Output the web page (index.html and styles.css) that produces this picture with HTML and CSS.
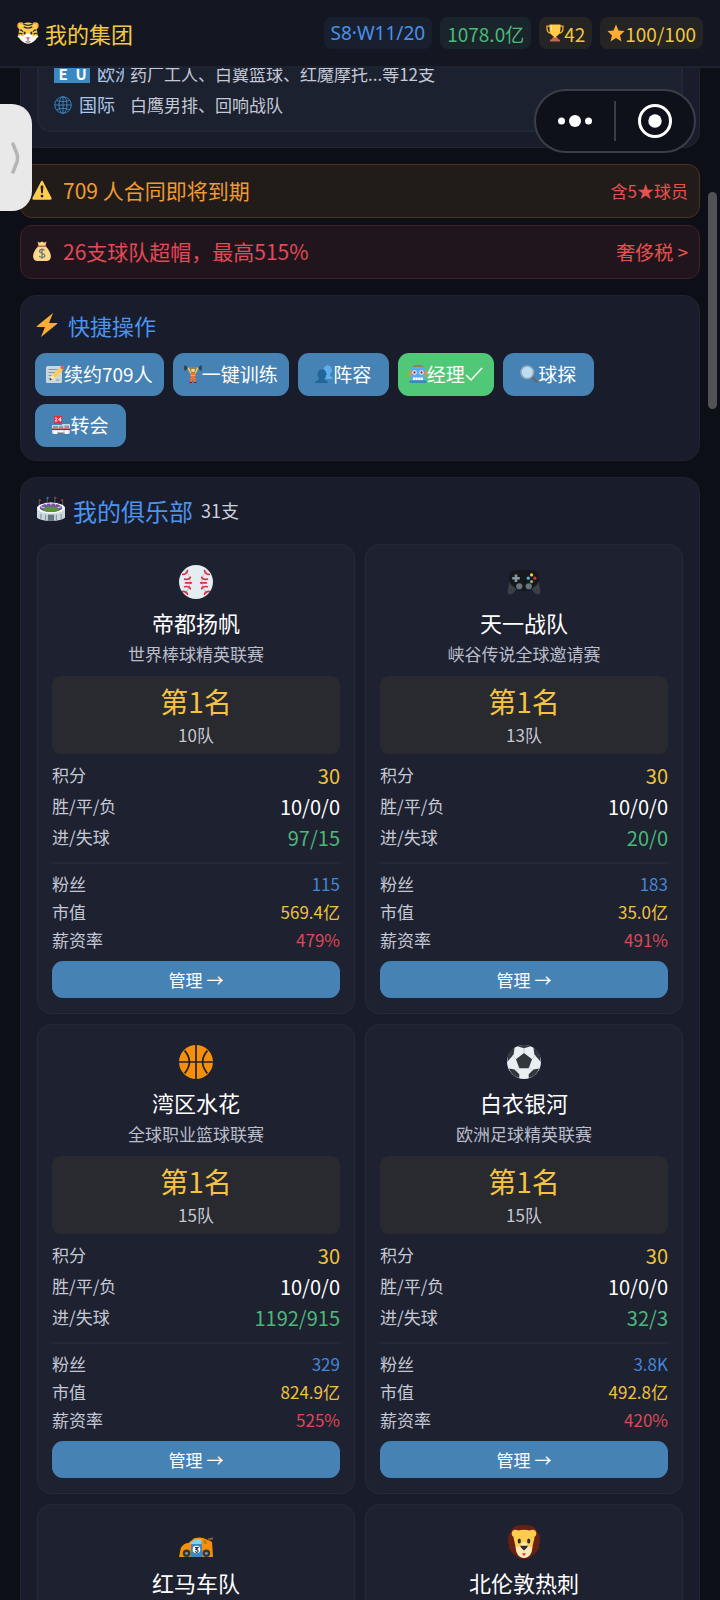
FILE: index.html
```html
<!DOCTYPE html>
<html lang="zh-CN">
<head>
<meta charset="utf-8">
<meta name="viewport" content="width=device-width, initial-scale=1">
<title>我的集团</title>
<link rel="stylesheet" href="styles.css">
</head>
<body>
<svg class="sprite" aria-hidden="true">
  <symbol id="tiger" viewBox="0 0 36 36">
    <circle cx="6" cy="6" r="5.5" fill="#ffac33"/><circle cx="30" cy="6" r="5.5" fill="#ffac33"/>
    <circle cx="6.500" cy="6.500" r="3" fill="#ffd9a0"/><circle cx="29.500" cy="6.500" r="3" fill="#ffd9a0"/>
    <path fill="#ffcc4d" d="M18 1C8 1 3 8 3 16c0 4-1 6-2 8 3 1 3 3 5 5 3 4 8 6 12 6s9-2 12-6c2-2 2-4 5-5-1-2-2-4-2-8C33 8 28 1 18 1z"/>
    <path fill="#fff" d="M1 23c3-1 6-1 9 1 3-4 5-5 8-5s5 1 8 5c3-2 6-2 9-1-1 3-3 3-5 6-3 4-8 6-12 6s-9-2-12-6c-2-3-4-3-5-6z"/>
    <path d="M10 3q8 5 16 0M11 8q7 4 14 0M4 13q4 0 6 3M32 13q-4 0-6 3M3 19q4-1 6 1M33 19q-4-1-6 1" fill="none" stroke="#292f33" stroke-width="2"/>
    <ellipse cx="12.500" cy="18" rx="1.700" ry="2.500" fill="#292f33"/><ellipse cx="23.500" cy="18" rx="1.700" ry="2.500" fill="#292f33"/>
    <path fill="#e75a70" d="M14 25h8l-4 4z"/><path d="M18 28v3m-4 1q4 2 8 0" stroke="#67404a" stroke-width="1.500" fill="none"/>
  </symbol>
  <symbol id="trophy" viewBox="0 0 36 36">
    <path fill="none" stroke="#ffac33" stroke-width="2.500" d="M8 4H2v5c0 6 4 9 9 10M28 4h6v5c0 6-4 9-9 10"/>
    <path fill="#ffcc4d" d="M7 1h22v8c0 9-4 14-8 15v5h-6v-5C11 23 7 18 7 9z"/>
    <path fill="#ffe8b6" d="M10 3h2v11c-2-3-2-7-2-11z"/>
    <path fill="#c1694f" d="M13 27h10l2 4h3v4H8v-4h3z"/>
  </symbol>
  <symbol id="star" viewBox="0 0 36 36"><path fill="#ffac33" d="M18 1l5 12 12 1-9 9 3 12-11-7-11 7 3-12-9-9 12-1z"/></symbol>
  <symbol id="globe" viewBox="0 0 36 36">
    <g fill="none" stroke="#3b7fb5" stroke-width="2"><circle cx="18" cy="18" r="16.500"/><ellipse cx="18" cy="18" rx="8" ry="16.500"/><path d="M18 1v34M1 18h34M4 9q14 5 28 0M4 27q14-5 28 0"/></g>
  </symbol>
  <symbol id="warning" viewBox="0 0 36 36">
    <path fill="#ffcc4d" d="M18 1.500c1 0 1.500.5 2 1.500l15 29c1 2 0 3.500-2 3.500H3c-2 0-3-1.500-2-3.500L16 3c.5-1 1-1.500 2-1.500z"/>
    <path fill="#231f20" d="M15.500 12c0-3 5-3 5 0l-1 12h-3z"/><circle cx="18" cy="29" r="2.600" fill="#231f20"/>
  </symbol>
  <symbol id="moneybag" viewBox="0 0 36 36">
    <path fill="#fdd888" d="M10 1l4 2 4-2 4 2 4-2-2 8c5 4 10 12 10 19 0 5-3 8-8 8H10c-5 0-8-3-8-8C2 21 7 13 12 9z"/>
    <path d="M11 9.500h14" stroke="#bf6952" stroke-width="2.500" stroke-linecap="round"/>
    <path d="M22.500 17c-2-3-9-3-9 1.500 0 4.500 9.500 2.500 9.500 7.500 0 4.500-8 4.500-10 1M18 13v19" fill="none" stroke="#67757f" stroke-width="2.200"/>
  </symbol>
  <symbol id="bolt" viewBox="0 0 36 36"><path fill="#ffac33" d="M27 0L3 19.500c-1 .8-.6 1.500.5 1.500H15L9 36 33 16.500c1-.8.600-1.500-.5-1.500H21z"/></symbol>
  <symbol id="memo" viewBox="0 0 36 36">
    <path fill="#ccd6dd" d="M3 2h26q3 0 3 3v28q0 3-3 3H3q-3 0-3-3V5q0-3 3-3z"/>
    <path stroke="#8899a6" stroke-width="2" d="M5 9h18M5 15h14M5 21h9M5 27h9M20 30h7"/>
    <path fill="#ffcc4d" d="M30 4l5 5-17 17-6-6z"/><path fill="#ea596e" d="M31 2q2-2 4 0t0 5l-2 3-5-5z"/><path fill="#ffe8b6" d="M12 19l7 7-11 4z"/><path fill="#292f33" d="M9 26l3 3-5 2z"/>
  </symbol>
  <symbol id="lifter" viewBox="0 0 36 36">
    <path d="M4 6h28" stroke="#99aab5" stroke-width="1.500"/><path d="M2 1v10M5 3v6M34 1v10M31 3v6" stroke="#31373d" stroke-width="2.800"/>
    <path d="M9 7l5 10M27 7l-5 10" stroke="#ffcc4d" stroke-width="3" stroke-linecap="round"/>
    <circle cx="18" cy="10" r="4" fill="#ffdc5d"/><path fill="#bb6b2b" d="M13.500 9q0-5 4.500-5t4.500 5q-4.500-3-9 0z"/>
    <path fill="#f4702c" d="M13 15h10l-1 11h2l-1 8h-3l-2-7-2 7h-3l-1-8h2z"/><path d="M13 21h10" stroke="#ffcc4d" stroke-width="1.500"/><path d="M11 35h5M20 35h5" stroke="#a0041e" stroke-width="2"/>
  </symbol>
  <symbol id="people" viewBox="0 0 36 36">
    <path fill="#5dadec" d="M18 8c0-10 15-10 15 0 2 1 1 4 0 5-1 4-3 5-3 7 0 3 6 3 6 8H20c4-10-2-10-2-20z"/>
    <path fill="#226699" d="M6 16c0-10 16-10 16 0 2 1 1 4 0 5-1 4-3 5-3 7 0 3 7 3 7 8H0c0-5 8-5 8-8 0-2-2-3-2-7-2-1-2-4 0-5z"/>
  </symbol>
  <symbol id="robot" viewBox="0 0 36 36">
    <path d="M7 4Q18-1 29 4" fill="none" stroke="#a9713c" stroke-width="2.500"/>
    <path fill="#f4900c" d="M0 13q0-3 3-3h30q3 0 3 3v8q0 3-3 3H3q-3 0-3-3z"/>
    <path fill="#55acee" d="M7 4h22q3 0 3 4v26H4V8q0-4 3-4z"/><path fill="#3b88c3" d="M1 31h34v5H1z"/>
    <circle cx="11" cy="15" r="4.500" fill="#e8eef2"/><circle cx="25" cy="15" r="4.500" fill="#e8eef2"/><circle cx="11" cy="15" r="2.300" fill="#be1931"/><circle cx="25" cy="15" r="2.300" fill="#be1931"/>
    <path fill="#fff" d="M8 25h20v5H8z"/><path d="M13 25v5M18 25v5M23 25v5" stroke="#99aab5"/>
  </symbol>
  <symbol id="search" viewBox="0 0 36 36">
    <path d="M24 24l9 9" stroke="#5f6a73" stroke-width="5" stroke-linecap="round"/><circle cx="14.500" cy="14.500" r="12.500" fill="#bdddf4" stroke="#99a9b5" stroke-width="3"/>
  </symbol>
  <symbol id="store" viewBox="0 0 36 36">
    <path fill="#dd2e44" d="M4 0h16v15H4z"/><path d="M6 5q3-3 4 0 0 2-4 5h5M17 11V3l-4 5h6" fill="none" stroke="#fff" stroke-width="1.800"/>
    <path fill="#ccd6dd" d="M0 18h20v-2h16v19H0z"/><path fill="#8899a6" d="M2 20h10v4H2zM14 20h8v4h-8zM25 19h9v5h-9z"/><path d="M0 26.500h36" stroke="#be1931" stroke-width="3"/><path fill="#fff" d="M3 29h8v7H3zM13 29h9v5h-9zM26 29h7v7h-7z"/><path fill="#67757f" d="M11 33h12v3H11z"/>
  </symbol>
  <symbol id="stadium" viewBox="0 0 36 36">
    <path d="M3 12V4M13 9V1M23 9V1M33 12V4" stroke="#66757f"/><path fill="#b8323f" d="M3 4l3 1.500L3 7zM23 1l3 1.500L23 4zM33 4l-3 1.500L33 7z"/><path fill="#3b88c3" d="M13 1l3 1.500L13 4z"/>
    <path fill="#ccd6dd" d="M0 15h36v13q-4 4-18 4T0 28z"/><path d="M5 23v7M11 24v8M25 24v8M31 23v7" stroke="#8899a6" stroke-width="1.500"/>
    <ellipse cx="18" cy="15.500" rx="18" ry="7" fill="#f5f8fa"/><ellipse cx="18" cy="15" rx="14.500" ry="5.500" fill="#744eaa"/><path d="M5 14l5 1M31 14l-5 1M10 9l3 3M26 9l-3 3M18 8v4" stroke="#fff"/><ellipse cx="18" cy="17" rx="10.500" ry="3.500" fill="#5c913b"/>
    <path fill="#66757f" d="M14 24h8v8h-8z"/>
  </symbol>
  <symbol id="baseball" viewBox="0 0 36 36">
    <circle cx="18" cy="18" r="18" fill="#e6edf2"/><path d="M6 5q12 13 0 26M30 5q-12 13 0 26" fill="none" stroke="#d3a0aa" stroke-width=".8"/>
    <path d="M4 10q4 0 5-4M6 15q5 1 6-2M7 19h6M6 23q5-1 6 2M4 28q4 0 5 3M32 10q-4 0-5-4M30 15q-5 1-6-2M29 19h-6M30 23q-5-1-6 2M32 28q-4 0-5 3" fill="none" stroke="#dd2e44" stroke-width="1.800" stroke-linecap="round"/>
  </symbol>
  <symbol id="gamepad" viewBox="0 0 36 36">
    <path fill="#3b4045" d="M3 15h9l-3 12q-4 5-7 4-2-1-1-6zM33 15h-9l3 12q4 5 7 4 2-1 1-6z"/>
    <path fill="#16191b" d="M7 6q11-2 22 0 6 2 5 10-1 5-5 7l-5 4q-6 1-12 0l-5-4q-4-2-5-7Q1 8 7 6z"/>
    <path d="M5.500 14h8M9.500 10v8" stroke="#8899a6" stroke-width="2.800"/><circle cx="13" cy="22.500" r="3.300" fill="#66757f"/><circle cx="23" cy="22.500" r="3.300" fill="#66757f"/>
    <circle cx="26" cy="10.500" r="1.700" fill="#ffcc4d"/><circle cx="29.500" cy="14" r="1.700" fill="#dd2e44"/><circle cx="26" cy="17.500" r="1.700" fill="#a6a455"/><circle cx="22.500" cy="14" r="1.700" fill="#55acee"/>
  </symbol>
  <symbol id="basketball" viewBox="0 0 36 36">
    <circle cx="18" cy="18" r="18" fill="#f4900c"/><path d="M18 0v36M0 18h36M6 6q10 12 0 24M30 6q-10 12 0 24" fill="none" stroke="#231f20" stroke-width="1.800"/>
  </symbol>
  <symbol id="soccer" viewBox="0 0 36 36">
    <circle cx="18" cy="18" r="18" fill="#e9eff3"/>
    <path fill="#31373d" d="M18 8.500l8.500 6.500-3.500 9.500H13L9.500 15zM11 1.400Q18-1.200 25 1.400L18 3.500zM.5 18Q0 7 8 3l-1 7-5 6zM35.500 18Q36 7 28 3l1 7 5 6zM2 25l6 1 5 5v4Q5 33 2 25zM34 25l-6 1-5 5v4q8-2 11-10z"/>
    <path d="M18 9V3M26 15l4-4M23 24l4 3M13 24l-4 3M10 15l-4-4" stroke="#b8c4cc" stroke-width=".8"/>
  </symbol>
  <symbol id="racecar" viewBox="0 0 36 36">
    <path fill="#8a5a22" d="M31 14l5-1v2l-5 2z"/><path fill="#f4900c" d="M0 34l2-10q3-5 8-5l6-5q8-2 13 1l6 3 1 16z"/>
    <path fill="#8ccaf7" d="M12 19l5-4h7l-1 5H12z"/><path fill="#3b88c3" d="M13 20h11l1 14H12z"/><path fill="#c77a15" d="M26 15l3 1 1 4h-4z"/>
    <circle cx="18.500" cy="26" r="4" fill="#fff"/><path d="M17 24h3l-2 2q3 0 2 2t-3 0" fill="none" stroke="#292f33" stroke-width="1.200"/>
    <circle cx="8" cy="30" r="4" fill="#31373d"/><circle cx="29" cy="30" r="4" fill="#31373d"/><circle cx="8" cy="30" r="1.500" fill="#8899a6"/><circle cx="29" cy="30" r="1.500" fill="#8899a6"/>
  </symbol>
  <symbol id="lion" viewBox="0 0 36 36">
    <path fill="#662113" d="M18 0c8 0 12 2 14 7 4 5 3 10 2 16-1 5-4 7-7 9-2 3-6 4-9 4s-7-1-9-4c-3-2-6-4-7-9C1 17 0 12 4 7 6 2 10 0 18 0z"/>
    <circle cx="9" cy="9" r="4" fill="#ffcc4d"/><circle cx="27" cy="9" r="4" fill="#ffcc4d"/>
    <path fill="#ffcc4d" d="M18 5c8 0 11 3 11 9l-3 13q-3 8-8 8t-8-8L7 14c0-6 3-9 11-9z"/>
    <path fill="#ffe8b6" d="M18 18q3 0 4 5h5q-1 12-9 12T9 23h5q1-5 4-5z"/>
    <ellipse cx="13" cy="17" rx="1.700" ry="2.700" fill="#292f33"/><ellipse cx="23" cy="17" rx="1.700" ry="2.700" fill="#292f33"/><path fill="#292f33" d="M14 22h8q0 2-4 5-4-3-4-5z"/><path fill="#dd2e44" d="M16 30h4l-2 3z"/>
  </symbol>
</svg>

<div class="app">
  <header class="topbar">
    <h1 class="brand"><svg class="icon-22"><use href="#tiger"/></svg>我的集团</h1>
    <div class="badges">
      <span class="badge blue">S8·W11/20</span>
      <span class="badge green">1078.0亿</span>
      <span class="badge gold"><svg class="icon-18"><use href="#trophy"/></svg>42</span>
      <span class="badge gold"><svg class="icon-18"><use href="#star"/></svg>100/100</span>
    </div>
  </header>

  <main class="content">
    <section class="panel regions">
      <div class="region-list">
        <div class="region"><span class="region-name"><span class="flag"><b>E</b><b>U</b></span>欧洲</span><span class="region-teams">药厂工人、白翼篮球、红魔摩托...等12支</span></div>
        <div class="region"><span class="region-name"><svg class="icon-18"><use href="#globe"/></svg>国际</span><span class="region-teams">白鹰男排、回响战队</span></div>
      </div>
    </section>

    <div class="alerts">
      <a class="alert warn" href="#contracts"><svg class="icon-20"><use href="#warning"/></svg><span class="alert-text">709 人合同即将到期</span><span class="alert-note small">含5★球员</span></a>
      <a class="alert danger" href="#tax"><svg class="icon-20"><use href="#moneybag"/></svg><span class="alert-text">26支球队超帽，最高515%</span><span class="alert-note">奢侈税 &gt;</span></a>
    </div>

    <section class="panel quick">
      <h2 class="quick-title"><svg class="icon-24"><use href="#bolt"/></svg>快捷操作</h2>
      <div class="actions">
        <button class="action"><svg class="icon-18"><use href="#memo"/></svg>续约709人</button>
        <button class="action"><svg class="icon-18"><use href="#lifter"/></svg>一键训练</button>
        <button class="action"><svg class="icon-18"><use href="#people"/></svg>阵容</button>
        <button class="action on"><svg class="icon-18"><use href="#robot"/></svg>经理<svg class="icon-18" viewBox="0 0 18 18"><path d="M1 10l5 5L17 3" fill="none" stroke="#fff" stroke-width="1.500"/></svg></button>
        <button class="action"><svg class="icon-18"><use href="#search"/></svg>球探</button>
        <button class="action"><svg class="icon-18"><use href="#store"/></svg>转会</button>
      </div>
    </section>

    <section class="panel clubs">
      <h2 class="clubs-title"><svg class="icon-28"><use href="#stadium"/></svg>我的俱乐部<span class="count">31支</span></h2>
      <div class="club-grid">
        <article class="club">
          <svg class="icon-34"><use href="#baseball"/></svg>
          <h3 class="club-name">帝都扬帆</h3>
          <p class="league">世界棒球精英联赛</p>
          <div class="rank"><strong>第1名</strong><span>10队</span></div>
          <dl class="stats main-stats">
            <div><dt>积分</dt><dd class="c-gold">30</dd></div>
            <div><dt>胜/平/负</dt><dd>10/0/0</dd></div>
            <div><dt>进/失球</dt><dd class="c-green">97/15</dd></div>
          </dl>
          <dl class="stats sub-stats">
            <div><dt>粉丝</dt><dd class="c-blue">115</dd></div>
            <div><dt>市值</dt><dd class="c-gold">569.4亿</dd></div>
            <div><dt>薪资率</dt><dd class="c-red">479%</dd></div>
          </dl>
          <button class="manage">管理 →</button>
        </article>
        <article class="club">
          <svg class="icon-34"><use href="#gamepad"/></svg>
          <h3 class="club-name">天一战队</h3>
          <p class="league">峡谷传说全球邀请赛</p>
          <div class="rank"><strong>第1名</strong><span>13队</span></div>
          <dl class="stats main-stats">
            <div><dt>积分</dt><dd class="c-gold">30</dd></div>
            <div><dt>胜/平/负</dt><dd>10/0/0</dd></div>
            <div><dt>进/失球</dt><dd class="c-green">20/0</dd></div>
          </dl>
          <dl class="stats sub-stats">
            <div><dt>粉丝</dt><dd class="c-blue">183</dd></div>
            <div><dt>市值</dt><dd class="c-gold">35.0亿</dd></div>
            <div><dt>薪资率</dt><dd class="c-red">491%</dd></div>
          </dl>
          <button class="manage">管理 →</button>
        </article>
        <article class="club">
          <svg class="icon-34"><use href="#basketball"/></svg>
          <h3 class="club-name">湾区水花</h3>
          <p class="league">全球职业篮球联赛</p>
          <div class="rank"><strong>第1名</strong><span>15队</span></div>
          <dl class="stats main-stats">
            <div><dt>积分</dt><dd class="c-gold">30</dd></div>
            <div><dt>胜/平/负</dt><dd>10/0/0</dd></div>
            <div><dt>进/失球</dt><dd class="c-green">1192/915</dd></div>
          </dl>
          <dl class="stats sub-stats">
            <div><dt>粉丝</dt><dd class="c-blue">329</dd></div>
            <div><dt>市值</dt><dd class="c-gold">824.9亿</dd></div>
            <div><dt>薪资率</dt><dd class="c-red">525%</dd></div>
          </dl>
          <button class="manage">管理 →</button>
        </article>
        <article class="club">
          <svg class="icon-34"><use href="#soccer"/></svg>
          <h3 class="club-name">白衣银河</h3>
          <p class="league">欧洲足球精英联赛</p>
          <div class="rank"><strong>第1名</strong><span>15队</span></div>
          <dl class="stats main-stats">
            <div><dt>积分</dt><dd class="c-gold">30</dd></div>
            <div><dt>胜/平/负</dt><dd>10/0/0</dd></div>
            <div><dt>进/失球</dt><dd class="c-green">32/3</dd></div>
          </dl>
          <dl class="stats sub-stats">
            <div><dt>粉丝</dt><dd class="c-blue">3.8K</dd></div>
            <div><dt>市值</dt><dd class="c-gold">492.8亿</dd></div>
            <div><dt>薪资率</dt><dd class="c-red">420%</dd></div>
          </dl>
          <button class="manage">管理 →</button>
        </article>
        <article class="club">
          <svg class="icon-34"><use href="#racecar"/></svg>
          <h3 class="club-name">红马车队</h3>
        </article>
        <article class="club">
          <svg class="icon-34"><use href="#lion"/></svg>
          <h3 class="club-name">北伦敦热刺</h3>
        </article>
      </div>
    </section>
  </main>
</div>

<button class="drawer-tab" aria-label="展开"><svg class="drawer-icon" viewBox="0 0 12 32"><path d="M3 2l4 10q1 4 0 8L3 30" fill="none" stroke="#b4b5b5" stroke-width="3.500" stroke-linecap="round"/></svg></button>
<div class="capsule">
  <button class="capsule-btn" aria-label="更多"><svg class="dots" viewBox="0 0 34 12"><circle cx="3.500" cy="6" r="3.500" fill="#fff"/><circle cx="17" cy="6" r="6" fill="#fff"/><circle cx="30.500" cy="6" r="3.500" fill="#fff"/></svg></button>
  <button class="capsule-btn" aria-label="关闭"><svg class="icon-34" viewBox="0 0 34 34"><circle cx="17" cy="17" r="15.500" fill="none" stroke="#fff" stroke-width="3"/><circle cx="17" cy="17" r="6.700" fill="#fff"/></svg></button>
</div>
<div class="scroll-thumb"></div>
</body>
</html>
```

FILE: styles.css
```css
* { box-sizing: border-box; }

body {
  margin: 0;
  background: #0c0f16;
  color: #fff;
  font-family: "Noto Sans CJK SC", sans-serif;
  font-size: 17px;
}

h1, h2, h3, p, dl, dd { margin: 0; font-weight: 400; }
button { border: 0; padding: 0; color: inherit; font: inherit; background: none; }
svg { display: block; flex: none; }

.sprite { position: absolute; width: 0; height: 0; }
.icon-18 { width: 18px; height: 18px; }
.icon-20 { width: 20px; height: 20px; }
.icon-22 { width: 22px; height: 22px; }
.icon-24 { width: 24px; height: 24px; }
.icon-28 { width: 28px; height: 28px; }
.icon-34 { width: 34px; height: 34px; }

.app { display: flex; flex-direction: column; height: 100vh; overflow: hidden; }

.topbar {
  flex: none;
  display: flex;
  align-items: center;
  justify-content: space-between;
  height: 68px;
  padding: 0 17px;
  background: #141722;
  border-bottom: 2px solid #1d2230;
}
.brand { display: flex; align-items: center; gap: 6px; font-size: 22px; color: #f5c842; }
.badges { display: flex; gap: 8px; }
.badge {
  display: flex;
  align-items: center;
  height: 32px;
  padding: 0 7px;
  border-radius: 8px;
  font-size: 19px;
}
.badge.blue { background: #18202f; color: #4a90e8; font-family: "Noto Sans", "Noto Sans CJK SC", sans-serif; }
.badge.green { background: #19252b; color: #4cb878; }
.badge.gold { background: #252424; color: #f0c640; }

.content { flex: 1; min-height: 0; overflow: hidden; padding: 0 20px; }

.panel { background: #191c2a; border: 1px solid #20242f; border-radius: 16px; }

/* regions panel, scrolled partly under the top bar */
.regions { border-top: 0; border-radius: 0 0 16px 16px; padding: 0 16px 15px; }
.region-list {
  padding: 0 15px 10px;
  background: #1c2130;
  border: 2px solid #202737;
  border-top: 0;
  border-radius: 0 0 14px 14px;
  margin-top: -10px;
}
.region { display: flex; align-items: center; gap: 6px; height: 31px; }
.region-name {
  display: flex;
  align-items: center;
  gap: 7px;
  width: 70px;
  overflow: hidden;
  white-space: nowrap;
  font-size: 18px;
  line-height: 31px;
  color: #a9c6e6;
}
.region-teams { color: #c4c9d6; }
.flag { flex: none; display: flex; }
.flag b {
  width: 18px;
  height: 18px;
  background: #3b88c3;
  color: #fff;
  font-size: 15px;
  line-height: 18px;
  text-align: center;
}

.alerts { display: flex; flex-direction: column; gap: 7px; margin: 16px 0; }
.alert {
  display: flex;
  align-items: center;
  gap: 11px;
  height: 54px;
  padding: 0 11px 2px;
  border: 1px solid;
  border-radius: 12px;
  font-size: 21px;
  text-decoration: none;
}
.alert.warn { background: #211c1a; border-color: #49331d; color: #f09a32; }
.alert.danger { background: #21151d; border-color: #40202a; color: #e24a55; }
.alert-text { flex: 1; }
.alert-note { font-size: 19px; color: #e85050; }
.alert-note.small { font-size: 17px; }

.quick { padding: 13px 14px; }
.quick-title { display: flex; align-items: center; gap: 9px; height: 32px; margin-bottom: 12px; font-size: 22px; color: #4a94f0; }
.actions { display: flex; flex-wrap: wrap; gap: 8px 9px; }
.action {
  display: flex;
  align-items: center;
  justify-content: center;
  min-width: 91px;
  height: 43px;
  padding: 0 11px 2px;
  border-radius: 11px;
  background: #4682b4;
  font-size: 19px;
}
.action.on { background: #50c878; }

.clubs { margin-top: 16px; padding: 14px 16px 16px; }
.clubs-title { display: flex; align-items: center; gap: 8px; height: 36px; margin-bottom: 16px; font-size: 24px; color: #4a94f0; }
.count { font-size: 18px; color: #cdd1dc; }
.club-grid { display: grid; grid-template-columns: 1fr 1fr; gap: 10px; }
.club {
  display: flex;
  flex-direction: column;
  align-items: center;
  min-height: 470px;
  padding: 20px 14px 14px;
  background: #1e2130;
  border: 1px solid #262a37;
  border-radius: 14px;
}
.club-name { margin-top: 6px; font-size: 22px; line-height: 34px; }
.league { margin-top: 2px; line-height: 26px; color: #b9bdca; }
.rank {
  display: flex;
  flex-direction: column;
  align-items: center;
  width: 100%;
  height: 78px;
  margin-top: 9px;
  padding-top: 5px;
  border-radius: 9px;
  background: #292a30;
}
.rank strong { font-size: 28px; font-weight: 400; line-height: 40px; color: #f5c242; }
.rank span { line-height: 28px; color: #c4c7d0; }

.stats { width: 100%; }
.stats div { display: flex; align-items: center; justify-content: space-between; }
.stats dt { color: #c4c8d4; }
.main-stats { padding: 6px 0 9px; border-bottom: 2px solid #252937; }
.main-stats div { height: 31px; }
.main-stats dt { padding-bottom: 3px; }
.main-stats dd { font-size: 20px; }
.sub-stats { padding: 5px 0 8px; }
.sub-stats div { height: 28px; }
.c-gold { color: #f0c23c; }
.c-green { color: #4cb878; }
.c-blue { color: #4186d8; }
.c-red { color: #dc4856; }

.manage { width: 100%; height: 37px; border-radius: 11px; background: #4682b4; }

.drawer-tab {
  position: fixed;
  left: 0;
  top: 104px;
  display: flex;
  align-items: center;
  justify-content: flex-end;
  width: 32px;
  height: 107px;
  padding-right: 10px;
  border-radius: 0 20px 20px 0;
  background: #e8e9e8;
}
.drawer-icon { width: 12px; height: 32px; }

.capsule {
  position: fixed;
  right: 24px;
  top: 89px;
  display: flex;
  align-items: center;
  width: 162px;
  height: 64px;
  border: 2px solid #3c3e46;
  border-radius: 32px;
  background: #0e111a;
}
.capsule-btn { flex: 1; display: flex; align-items: center; justify-content: center; height: 40px; }
.capsule-btn + .capsule-btn { border-left: 2px solid #3c3e46; }
.dots { width: 34px; height: 12px; }

.scroll-thumb {
  position: fixed;
  right: 3px;
  top: 192px;
  width: 9px;
  height: 217px;
  border-radius: 5px;
  background: #505255;
}
```
